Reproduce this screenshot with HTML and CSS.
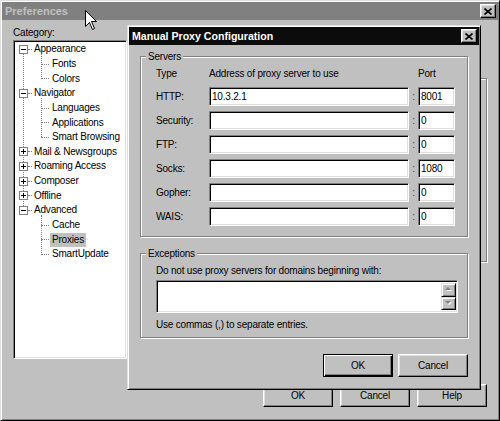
FILE: index.html
```html
<!DOCTYPE html>
<html lang="en">
<head>
    <meta charset="UTF-8">
    <title>Preferences - Manual Proxy Configuration</title>
    <link rel="stylesheet" href="styles.css">
</head>
<body>
    <div class="prefs">
        <div class="titlebar inactive">
            <span class="title">Preferences</span>
            <span class="close-btn"><svg width="8" height="7" viewBox="0 0 8 7"><path d="M0.5 0.5 L7.5 6.5 M7.5 0.5 L0.5 6.5" stroke="#000" stroke-width="1.6"/></svg></span>
        </div>

        <div class="prefs-main">
            <div class="category">
                <div class="category-label">Category:</div>
                <div class="tree-box">
                    <ul class="tree">
                        <li>
                            <div class="row"><span class="toggle"></span><span class="label">Appearance</span></div>
                            <ul>
                                <li><div class="row"><span class="label">Fonts</span></div></li>
                                <li><div class="row"><span class="label">Colors</span></div></li>
                            </ul>
                        </li>
                        <li>
                            <div class="row"><span class="toggle"></span><span class="label">Navigator</span></div>
                            <ul>
                                <li><div class="row"><span class="label">Languages</span></div></li>
                                <li><div class="row"><span class="label">Applications</span></div></li>
                                <li><div class="row"><span class="label">Smart Browsing</span></div></li>
                            </ul>
                        </li>
                        <li><div class="row"><span class="toggle plus"></span><span class="label">Mail &amp; Newsgroups</span></div></li>
                        <li><div class="row"><span class="toggle plus"></span><span class="label">Roaming Access</span></div></li>
                        <li><div class="row"><span class="toggle plus"></span><span class="label">Composer</span></div></li>
                        <li><div class="row"><span class="toggle plus"></span><span class="label">Offline</span></div></li>
                        <li>
                            <div class="row"><span class="toggle"></span><span class="label">Advanced</span></div>
                            <ul>
                                <li><div class="row"><span class="label">Cache</span></div></li>
                                <li><div class="row"><span class="label selected">Proxies</span></div></li>
                                <li><div class="row"><span class="label">SmartUpdate</span></div></li>
                            </ul>
                        </li>
                    </ul>
                </div>
            </div>
            <div class="pane">
                <div class="pane-frame"></div>
            </div>
        </div>

        <div class="prefs-buttons">
            <button class="btn">OK</button>
            <button class="btn">Cancel</button>
            <button class="btn">Help</button>
        </div>
    </div>

    <!-- modal dialog sits over the preferences window -->
    <div class="dialog">
        <div class="titlebar active">
            <span class="title">Manual Proxy Configuration</span>
            <span class="close-btn"><svg width="8" height="7" viewBox="0 0 8 7"><path d="M0.5 0.5 L7.5 6.5 M7.5 0.5 L0.5 6.5" stroke="#000" stroke-width="1.6"/></svg></span>
        </div>

        <div class="dialog-body">
            <fieldset class="group">
                <legend>Servers</legend>
                <div class="servers-inner">
                    <div class="proxy-head">
                        <span class="col-type">Type</span>
                        <span class="col-addr">Address of proxy server to use</span>
                        <span class="col-port">Port</span>
                    </div>
                    <div class="proxy-rows">
                        <div class="proxy-row">
                            <label>HTTP:</label>
                            <div class="field addr">10.3.2.1</div>
                            <span class="colon">:</span>
                            <div class="field port">8001</div>
                        </div>
                        <div class="proxy-row">
                            <label>Security:</label>
                            <div class="field addr"></div>
                            <span class="colon">:</span>
                            <div class="field port">0</div>
                        </div>
                        <div class="proxy-row">
                            <label>FTP:</label>
                            <div class="field addr"></div>
                            <span class="colon">:</span>
                            <div class="field port">0</div>
                        </div>
                        <div class="proxy-row">
                            <label>Socks:</label>
                            <div class="field addr"></div>
                            <span class="colon">:</span>
                            <div class="field port">1080</div>
                        </div>
                        <div class="proxy-row">
                            <label>Gopher:</label>
                            <div class="field addr"></div>
                            <span class="colon">:</span>
                            <div class="field port">0</div>
                        </div>
                        <div class="proxy-row">
                            <label>WAIS:</label>
                            <div class="field addr"></div>
                            <span class="colon">:</span>
                            <div class="field port">0</div>
                        </div>
                    </div>
                </div>
            </fieldset>

            <fieldset class="group exceptions">
                <legend>Exceptions</legend>
                <div class="exceptions-inner">
                    <p>Do not use proxy servers for domains beginning with:</p>
                    <div class="field-multi">
                        <div class="area"></div>
                        <div class="scroll">
                            <span class="arrow"><svg width="7" height="5" viewBox="0 0 7 5"><path d="M4 1 L7 4 L1 4 Z" fill="#fff"/><path d="M3 0 L6 3 L0 3 Z" fill="#808080"/></svg></span>
                            <span class="arrow"><svg width="7" height="5" viewBox="0 0 7 5"><path d="M1 1 L7 1 L4 4 Z" fill="#fff"/><path d="M0 0 L6 0 L3 3 Z" fill="#808080"/></svg></span>
                        </div>
                    </div>
                    <p>Use commas (,) to separate entries.</p>
                </div>
            </fieldset>

            <div class="dialog-buttons">
                <button class="btn default">OK</button>
                <button class="btn">Cancel</button>
            </div>
        </div>
    </div>

    <svg class="cursor" width="13" height="20" viewBox="0 0 13 20">
        <path d="M0.5 0.5 L0.5 16.5 L4.5 12.5 L7.5 19.5 L9.5 18.5 L6.5 11.5 L11.5 11.5 Z" fill="#fff" stroke="#000" stroke-width="1"/>
    </svg>
</body>
</html>
```

FILE: styles.css
```css
* {
    box-sizing: border-box;
}
body {
    margin: 0;
    width: 500px;
    height: 421px;
    overflow: hidden;
    position: relative;
    background: #c0c0c0;
    font-family: "Liberation Sans", Arial, sans-serif;
    font-size: 10px;
    letter-spacing: -0.2px;
    color: #000;
}

/* window chrome */
.prefs {
    width: 500px;
    height: 421px;
    display: flex;
    flex-direction: column;
    padding: 1px;
    border: 1px solid;
    border-color: #dfdfdf #000 #000 #dfdfdf;
    box-shadow: inset 1px 1px #fff, inset -1px -1px #808080;
}
.titlebar {
    height: 18px;
    flex-shrink: 0;
    display: flex;
    align-items: center;
    justify-content: space-between;
    padding: 0 2px 0 3px;
    font-weight: bold;
    font-size: 11px;
    letter-spacing: 0;
}
.titlebar.inactive {
    background: #808080;
    color: #c0c0c0;
}
.titlebar.active {
    background: #0c0c0c;
    color: #fff;
    font-size: 10.6px;
}
.close-btn {
    width: 16px;
    height: 14px;
    display: flex;
    align-items: center;
    justify-content: center;
    background: #c0c0c0;
    border: 1px solid;
    border-color: #fff #000 #000 #fff;
    box-shadow: inset -1px -1px #808080, inset 1px 1px #dfdfdf;
}
.close-btn svg {
    display: block;
}

.btn {
    width: 70px;
    height: 23px;
    padding: 0;
    font: inherit;
    letter-spacing: inherit;
    color: #000;
    background: #c0c0c0;
    border: 1px solid;
    border-color: #fff #000 #000 #fff;
    box-shadow: inset -1px -1px #808080, inset 1px 1px #dfdfdf;
}
.btn.default {
    border-color: #000;
    box-shadow: inset 1px 1px #fff, inset -1px -1px #000, inset -2px -2px #808080;
}

/* preferences window */
.prefs-main {
    display: flex;
    gap: 13px;
    padding: 6px 11px 0 11px;
}
.category {
    width: 114px;
    flex-shrink: 0;
}
.category-label {
    line-height: 13px;
    margin-bottom: 1px;
}
.tree-box {
    height: 319px;
    background: #fff;
    border: 1px solid;
    border-color: #808080 #fff #fff #808080;
    box-shadow: inset 1px 1px #000, inset -1px -1px #dfdfdf;
    padding: 1px;
    overflow: hidden;
}
.pane {
    flex: 1;
}
.pane-frame {
    margin-top: 52px;
    height: 184px;
    border: 1px solid #808080;
    box-shadow: inset 1px 1px #fff, 1px 1px #fff;
}
.prefs-buttons {
    margin-top: auto;
    display: flex;
    justify-content: flex-end;
    gap: 7px;
    padding: 0 11px 12px 0;
}

/* category tree */
.tree, .tree ul {
    list-style: none;
    margin: 0;
    padding: 0;
}
.tree li {
    position: relative;
}
.tree ul {
    position: relative;
}
.tree .row {
    position: relative;
    display: flex;
    align-items: center;
    height: 14.65px;
}
.tree > li > .row {
    padding-left: 4px;
}
.tree ul .row {
    padding-left: 35px;
}
.tree > li::before {
    content: '';
    position: absolute;
    left: 8px;
    top: 7px;
    bottom: -7px;
    border-left: 1px dotted #808080;
}
.tree > li:last-child::before {
    display: none;
}
.tree > li > .row::after {
    content: '';
    position: absolute;
    left: 13px;
    width: 4px;
    top: 7px;
    border-top: 1px dotted #808080;
}
.tree ul::before {
    content: '';
    position: absolute;
    left: 26px;
    top: -3px;
    bottom: 7px;
    border-left: 1px dotted #808080;
}
.tree ul .row::before {
    content: '';
    position: absolute;
    left: 26px;
    width: 8px;
    top: 7px;
    border-top: 1px dotted #808080;
}
.toggle {
    position: relative;
    z-index: 1;
    width: 9px;
    height: 9px;
    flex-shrink: 0;
    border: 1px solid #808080;
    background: #fff;
    margin-right: 4px;
}
.toggle::before {
    content: '';
    position: absolute;
    left: 1px;
    top: 3px;
    width: 5px;
    height: 1px;
    background: #000;
}
.toggle.plus::after {
    content: '';
    position: absolute;
    left: 3px;
    top: 1px;
    width: 1px;
    height: 5px;
    background: #000;
}
.label {
    padding: 0 2px;
    line-height: 14px;
    white-space: nowrap;
}
.label.selected {
    background: #c0c0c0;
}

/* proxy dialog */
.dialog {
    position: absolute;
    left: 127px;
    top: 25px;
    width: 354px;
    height: 365px;
    display: flex;
    flex-direction: column;
    padding: 1px;
    background: #c0c0c0;
    border: 1px solid;
    border-color: #dfdfdf #000 #000 #dfdfdf;
    box-shadow: inset 1px 1px #fff, inset -1px -1px #808080;
}
.dialog-body {
    padding: 5px 11px 0 11px;
    display: flex;
    flex-direction: column;
}
.group {
    margin: 0;
    padding: 0;
    min-width: 0;
    border: 1px solid #808080;
    box-shadow: inset 1px 1px #fff, 1px 1px #fff;
}
.group legend {
    margin-left: 5px;
    padding: 0 2px;
    line-height: 13px;
    background: #c0c0c0;
}
.exceptions {
    margin-top: 10px;
}
.servers-inner {
    padding: 4px 0 10px 15px;
}
.proxy-head {
    display: flex;
    line-height: 13px;
}
.col-type {
    width: 53px;
}
.col-addr {
    width: 209px;
}
.proxy-rows {
    display: flex;
    flex-direction: column;
    gap: 5px;
    margin-top: 7px;
}
.proxy-row {
    display: flex;
    align-items: center;
    height: 19px;
}
.proxy-row label {
    width: 53px;
}
.field {
    height: 19px;
    background: #fff;
    border: 1px solid;
    border-color: #808080 #fff #fff #808080;
    box-shadow: inset 1px 1px #000, inset -1px -1px #dfdfdf;
    padding: 0 2px;
    line-height: 17px;
}
.addr {
    width: 200px;
}
.colon {
    width: 9px;
    text-align: center;
    color: #404040;
}
.port {
    width: 37px;
}
.exceptions-inner {
    padding: 4px 9px 6px 15px;
}
.exceptions-inner p {
    margin: 0;
    line-height: 13px;
}
.field-multi {
    height: 33px;
    margin: 3px 0 5px;
    display: flex;
    padding: 2px 1px 2px 2px;
    background: #fff;
    border: 1px solid;
    border-color: #808080 #fff #fff #808080;
    box-shadow: inset 1px 1px #000, inset -1px -1px #dfdfdf;
}
.area {
    flex: 1;
}
.scroll {
    width: 15px;
    display: flex;
    flex-direction: column;
}
.arrow {
    height: 14px;
    display: flex;
    align-items: center;
    justify-content: center;
    background: #c0c0c0;
    border: 1px solid;
    border-color: #dfdfdf #000 #000 #dfdfdf;
    box-shadow: inset 1px 1px #fff, inset -1px -1px #808080;
}
.arrow svg {
    display: block;
}
.dialog-buttons {
    display: flex;
    justify-content: flex-end;
    gap: 5px;
    margin-top: 16px;
}

.cursor {
    position: absolute;
    left: 85px;
    top: 10px;
    z-index: 10;
}
```
